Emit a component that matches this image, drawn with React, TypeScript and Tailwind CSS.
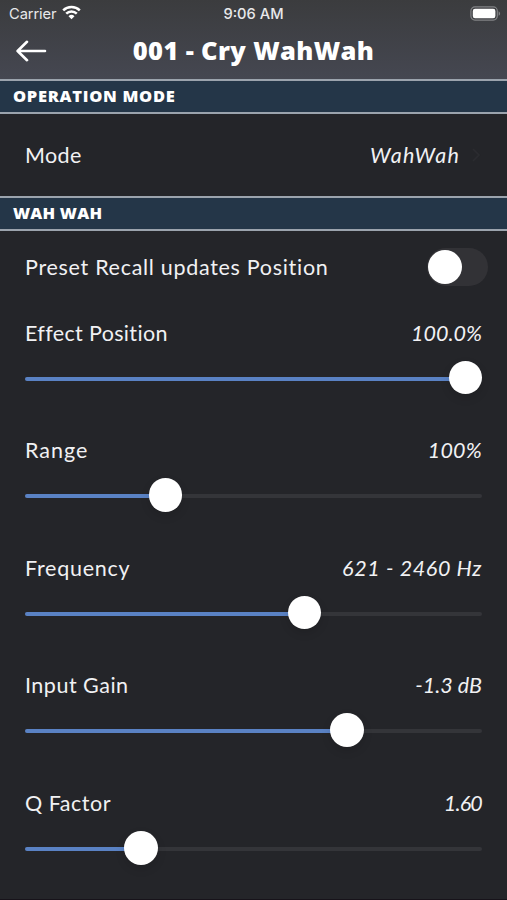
import { ReactNode } from 'react'
import clsx from 'clsx'

interface Param {
  label: string
  value: string
  position: number
  labelClass: string
  valueClass: string
}

// position is the thumb travel, from 0 to 1
const params: Param[] = [
  { label: 'Effect Position', value: '100.0%', position: 1, labelClass: 'tracking-[0.35px]', valueClass: 'tracking-[0px]' },
  { label: 'Range', value: '100%', position: 0.291, labelClass: 'tracking-[1px]', valueClass: 'tracking-[0.2px]' },
  { label: 'Frequency', value: '621 - 2460 Hz', position: 0.62, labelClass: 'tracking-[0.75px]', valueClass: 'tracking-[0.6px]' },
  { label: 'Input Gain', value: '-1.3 dB', position: 0.721, labelClass: 'tracking-[0.5px]', valueClass: 'tracking-[0px]' },
  { label: 'Q Factor', value: '1.60', position: 0.233, labelClass: 'tracking-[0.5px]', valueClass: 'tracking-[-0.8px]' },
]

const StatusBar = () => (
  <div className="grid h-7 grid-cols-3 items-center pl-[9px] pr-[6px] font-['Inter',sans-serif] text-[14.7px] leading-none text-[#e8e8ea]">
    <div className="flex items-center gap-[6px]">
      <span className="tracking-[-0.1px]">Carrier</span>
      <svg className="-mt-[2px]" width="19" height="15" viewBox="0 0 19 15" fill="none" stroke="white" strokeWidth="2.5">
        <path d="M1.2 5.4a11.8 11.8 0 0 1 16.6 0" />
        <path d="M4.2 8.7a7.5 7.5 0 0 1 10.6 0" />
        <path d="M9.5 14.2 6.5 11.2a4.3 4.3 0 0 1 6 0Z" fill="white" stroke="none" />
      </svg>
    </div>
    <span className="-ml-[3px] text-center font-medium whitespace-nowrap">9:06 AM</span>
    <svg className="-mt-[2px] justify-self-end" width="31" height="15" viewBox="0 0 31 15" fill="none">
      <rect x="0.9" y="0.9" width="26.4" height="13.2" rx="4" stroke="#818285" strokeWidth="1.2" />
      <rect x="2.8" y="2.8" width="22.6" height="9.4" rx="2.2" fill="white" />
      <path d="M28.6 5.2c2 .9 2 3.7 0 4.6Z" fill="#818285" />
    </svg>
  </div>
)

const SectionTitle = ({ children, className }: { children: ReactNode; className?: string }) => (
  <h2
    className={clsx(
      "flex h-[35px] shrink-0 items-center border-y-2 border-[#9ba3ad] bg-[#243648] pl-[13px] font-['Open_Sans',sans-serif] text-[16.5px] leading-none font-extrabold text-white",
      className
    )}
  >
    {children}
  </h2>
)

const Slider = ({ position }: { position: number }) => (
  <div className="relative mt-[13.5px] h-[34px]">
    <div className="absolute top-[15.5px] h-[4px] w-full rounded-full bg-[#343539]" />
    <div
      className="absolute top-[15.5px] h-[4px] rounded-full bg-[#5a82c4]"
      style={{ width: `${position * 423 + 17}px` }}
    />
    <div
      className="absolute -top-[0.5px] size-[33.5px] rounded-full bg-white shadow-[0_4px_10px_rgba(0,0,0,0.12)]"
      style={{ left: `${position * 423 + 0.5}px` }}
    />
  </div>
)

export default function App() {
  return (
    <div className="flex h-[900px] w-[507px] flex-col overflow-hidden border-b border-[#17131a] bg-[#242529] font-['Lato',sans-serif] text-[21.5px] leading-[30px] text-[#f1f1f3]">
      <header className="h-[79px] shrink-0 bg-linear-to-b from-[#3b3c3e] to-[#454751]">
        <StatusBar />
        <div className="grid h-[45px] grid-cols-[50px_1fr_50px] items-center">
          <svg className="ml-[16px]" width="31" height="22" viewBox="0 0 31 22" fill="none" stroke="white" strokeWidth="2.6" strokeLinecap="round" strokeLinejoin="round">
            <path d="M29 11H2M11 1.8 1.6 11l9.4 9.2" />
          </svg>
          <h1 className="text-center font-['Open_Sans',sans-serif] text-[25.5px] leading-none font-extrabold tracking-[0.35px] whitespace-nowrap text-white">
            001 - Cry WahWah
          </h1>
        </div>
      </header>

      <SectionTitle className="tracking-[0.7px]">OPERATION MODE</SectionTitle>
      <div className="flex h-[82px] shrink-0 items-center justify-between pl-[25px] pr-[26px]">
        <span className="tracking-[0.4px]">Mode</span>
        <div className="flex items-center gap-[11px]">
          <span className="tracking-[1.2px] italic">WahWah</span>
          <svg width="10" height="16" viewBox="0 0 10 16" fill="none" stroke="#2b2c30" strokeWidth="1.6">
            <path d="m2 2 6 6-6 6" />
          </svg>
        </div>
      </div>

      <SectionTitle className="tracking-[0.2px]">WAH WAH</SectionTitle>
      <div className="flex h-[72px] shrink-0 items-center justify-between pl-[25px] pr-[19px]">
        <span className="tracking-[0.7px]">Preset Recall updates Position</span>
        <div className="flex h-[38px] w-[61px] items-center rounded-full bg-[#323236] pl-[1px]">
          <div className="size-[33.5px] rounded-full bg-white" />
        </div>
      </div>

      <div className="flex shrink-0 flex-col px-[25px] pt-[14.5px]">
        {params.map((param) => (
          <div key={param.label} className="h-[117.67px]">
            <div className="flex justify-between whitespace-pre">
              <span className={param.labelClass}>{param.label}</span>
              <span className={clsx('italic', param.valueClass)}>{param.value}</span>
            </div>
            <Slider position={param.position} />
          </div>
        ))}
      </div>
    </div>
  )
}
